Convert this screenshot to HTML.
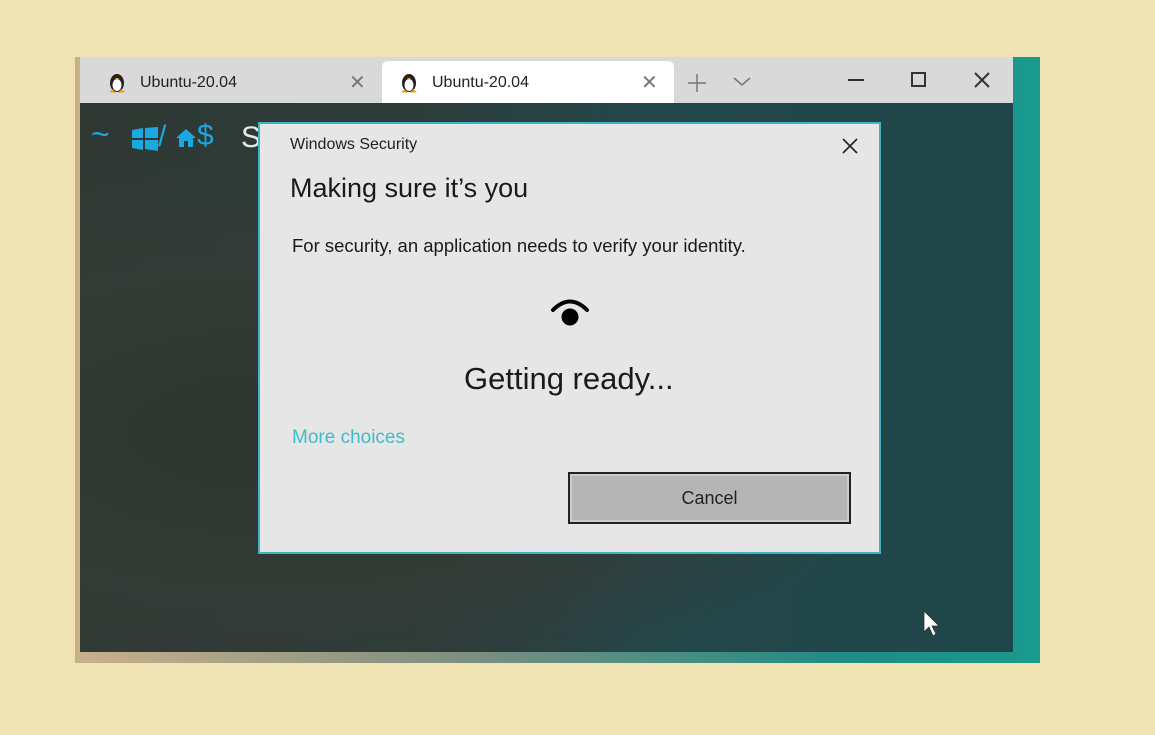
<!DOCTYPE html>
<html><head><meta charset="utf-8"><style>
body{margin:0;width:1155px;height:735px;background:#efe3b3;position:relative;overflow:hidden;font-family:"Liberation Sans",sans-serif}
.abs{position:absolute}
#win{left:75px;top:57px;width:965px;height:606px;background:linear-gradient(90deg,#c9b08a,#7d8f80 40%,#1f8c85 80%,#1a9a8f)}
#term{left:80px;top:103px;width:933px;height:549px;background:radial-gradient(ellipse at 20% 60%,#2e3530 0%,#333b37 35%,rgba(0,0,0,0) 60%),linear-gradient(90deg,#2f3833 0%,#2d3c39 35%,#23474a 60%,#1f4549 100%)}
#tb{left:80px;top:57px;width:933px;height:46px;background:#d9d9d9}
.tab{top:61px;height:42px;font-size:15px;color:#222;line-height:44px}
#tab2{left:382px;width:292px;background:#fff;border-radius:6px 6px 0 0}
.x{font-size:20px;color:#777}
#dlg{left:258px;top:122px;width:619px;height:428px;background:#e6e6e6;border:2px solid #3fb5c0}
</style></head><body>
<div id="win" class="abs"></div>
<div id="tb" class="abs"></div>
<div id="term" class="abs"></div>
<div class="abs tab" style="left:80px;width:300px"></div>
<div id="tab2" class="abs tab"></div>
<svg class="abs" style="left:107px;top:70px" width="20" height="24" viewBox="0 0 20 24"><ellipse cx="10" cy="13" rx="7" ry="9" fill="#222"/><ellipse cx="10" cy="15" rx="4.5" ry="6" fill="#fff"/><path d="M2 22 L6 19 L8 23Z M18 22 L14 19 L12 23Z" fill="#e8a317"/><path d="M8 8 L12 8 L10 10Z" fill="#e8a317"/></svg>
<div class="abs" style="left:140px;top:74px;font-size:16px;color:#222">Ubuntu-20.04</div>
<div class="abs x" style="left:349px;top:70px">✕</div>
<svg class="abs" style="left:399px;top:70px" width="20" height="24" viewBox="0 0 20 24"><ellipse cx="10" cy="13" rx="7" ry="9" fill="#222"/><ellipse cx="10" cy="15" rx="4.5" ry="6" fill="#fff"/><path d="M2 22 L6 19 L8 23Z M18 22 L14 19 L12 23Z" fill="#e8a317"/><path d="M8 8 L12 8 L10 10Z" fill="#e8a317"/></svg>
<div class="abs" style="left:432px;top:74px;font-size:16px;color:#222">Ubuntu-20.04</div>
<div class="abs x" style="left:641px;top:70px">✕</div>
<svg class="abs" style="left:686px;top:72px" width="22" height="22"><path d="M11 2V20M2 11H20" stroke="#777" stroke-width="1.5"/></svg>
<svg class="abs" style="left:733px;top:76px" width="18" height="12"><path d="M1 2L9 9L17 2" stroke="#777" stroke-width="1.5" fill="none"/></svg>
<svg class="abs" style="left:848px;top:78px" width="16" height="4"><path d="M0 2H16" stroke="#333" stroke-width="2"/></svg>
<svg class="abs" style="left:911px;top:72px" width="16" height="16"><rect x="1" y="1" width="13" height="13" stroke="#333" stroke-width="2" fill="none"/></svg>
<svg class="abs" style="left:973px;top:71px" width="18" height="18"><path d="M2 2L16 16M16 2L2 16" stroke="#333" stroke-width="2"/></svg>
<div class="abs" style="left:91px;top:116px;font-size:32px;color:#1ba7e0">~</div>
<svg class="abs" style="left:132px;top:127px" width="26" height="24"><path d="M0 3L11 1V11H0Z M13 1L26 0V11H13Z M0 13H11V23L0 21Z M13 13H26V24L13 22Z" fill="#1ba7e0"/></svg>
<div class="abs" style="left:158px;top:120px;font-size:30px;color:#1ba7e0">/</div>
<svg class="abs" style="left:176px;top:129px" width="20" height="18"><path d="M10 0L20 9H17V18H12V12H8V18H3V9H0Z" fill="#1ba7e0"/></svg>
<div class="abs" style="left:197px;top:119px;font-size:30px;color:#1ba7e0">$</div>
<div class="abs" style="left:241px;top:121px;font-size:30px;color:#e8e8e8">S</div>
<div id="dlg" class="abs"></div>
<div class="abs" style="left:290px;top:136px;font-size:16px;color:#222">Windows Security</div>
<svg class="abs" style="left:842px;top:138px" width="16" height="16"><path d="M1 1L15 15M15 1L1 15" stroke="#222" stroke-width="1.6"/></svg>
<div class="abs" style="left:290px;top:173px;font-size:27px;color:#1a1a1a">Making sure it’s you</div>
<div class="abs" style="left:292px;top:235px;font-size:18.5px;color:#1a1a1a">For security, an application needs to verify your identity.</div>
<svg class="abs" style="left:548px;top:295px" width="44" height="36"><path d="M5 15 Q22 -2 39 15" stroke="#000" stroke-width="4" fill="none" stroke-linecap="round"/><circle cx="22" cy="22" r="8.5" fill="#000"/></svg>
<div class="abs" style="left:464px;top:361px;font-size:31px;color:#1a1a1a">Getting ready...</div>
<div class="abs" style="left:292px;top:427px;font-size:19px;color:#3fbccc">More choices</div>
<div class="abs" style="left:568px;top:472px;width:279px;height:48px;background:#b5b5b5;border:2px solid #222;box-shadow:inset 0 0 0 2px #ccc"></div>
<div class="abs" style="left:568px;top:488px;width:283px;text-align:center;font-size:18px;color:#222">Cancel</div>
<svg class="abs" style="left:922px;top:610px" width="20" height="28"><path d="M2 1V22L7 17L11 26L14 24L10 16H17Z" fill="#fff" stroke="#333" stroke-width="0.8"/></svg>
</body></html>
